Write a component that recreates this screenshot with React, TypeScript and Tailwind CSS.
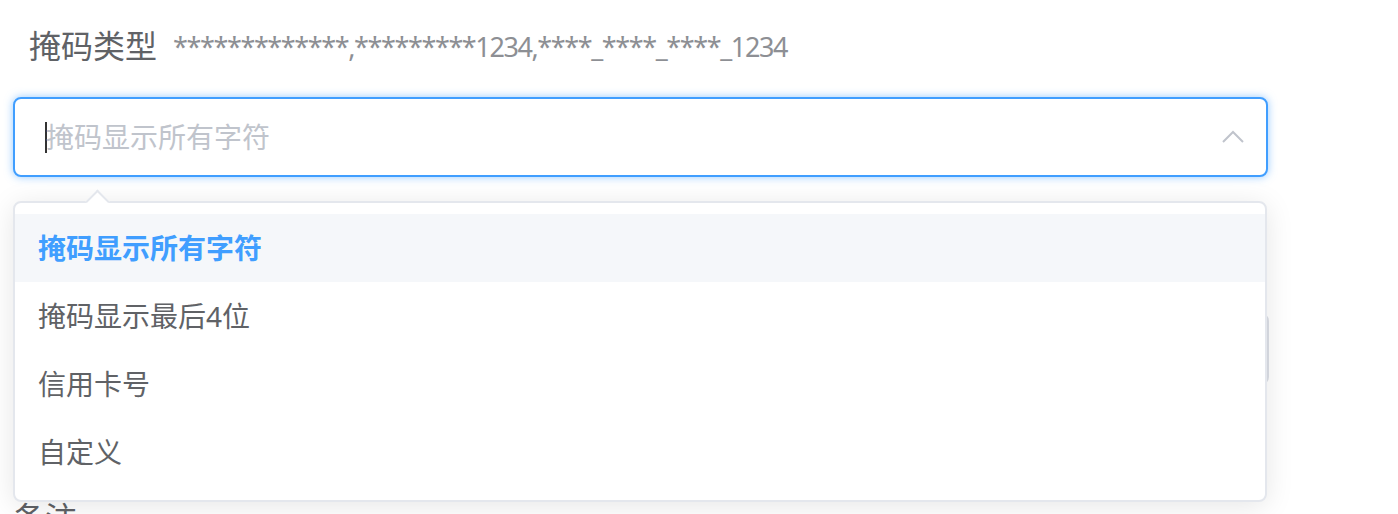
import React from 'react'

const options = ['掩码显示所有字符', '掩码显示最后4位', '信用卡号', '自定义']

export default function App() {
  const selected = 0

  return (
    <div
      className="relative h-[514px] w-[1398px] overflow-hidden bg-white"
      style={{ fontFamily: '"Noto Sans", "Noto Sans CJK SC", sans-serif' }}
    >
      <div className="pl-[13px] pt-[22px]">
        {/* Label row */}
        <div className="flex h-[48px] items-center">
          <span className="pl-[16px] text-[32px] leading-none text-[#606266]">掩码类型</span>
          <span className="ml-[16px] text-[27px] leading-none tracking-[-1.4px] text-[#8d8f94]">
            *************,*********1234,****_****_****_1234
          </span>
        </div>

        {/* Select */}
        <div className="relative mt-[27px] w-[1255px]">
          <div className="flex h-[80px] items-center rounded-[8px] border-2 border-[#409eff] bg-white pl-[30px] pr-[20px] shadow-[0_0_8px_rgba(64,158,255,0.55)]">
            <span className="h-[31px] w-[2px] bg-[#333]" />
            <span className="-ml-[1px] flex-1 text-[28px] leading-none text-[#c0c4cc]">掩码显示所有字符</span>
            <svg width="26" height="26" viewBox="0 0 26 26" fill="none">
              <polyline points="3,18 13,8 23,18" stroke="#c0c4cc" strokeWidth="2" />
            </svg>
          </div>

          {/* Dropdown */}
          <div className="absolute left-0 top-[104px] z-10 h-[301px] w-[1254px] rounded-[8px] border-2 border-[#e4e7ed] bg-white pt-[11px] shadow-[0_4px_28px_rgba(0,0,0,0.1)]">
            <div className="absolute -top-[10px] left-[74px] h-[17px] w-[17px] rotate-45 border-l-2 border-t-2 border-[#e4e7ed] bg-white" />
            {options.map((o, i) => (
              <div
                key={o}
                className={`flex h-[68px] items-center pl-[23px] text-[28px] leading-none ${
                  i === selected ? 'bg-[#f5f7fa] font-bold text-[#409eff]' : 'text-[#606266]'
                }`}
              >
                {o}
              </div>
            ))}
          </div>
        </div>

        {/* Content hidden under the dropdown */}
        <div className="mt-[136px] h-[72px] w-[1256px] rounded-[8px] border-2 border-[#dcdfe6]" />
        <div className="mt-[109px] h-[48px] text-[32px] leading-[48px] text-[#606266]">备注</div>
      </div>
    </div>
  )
}
